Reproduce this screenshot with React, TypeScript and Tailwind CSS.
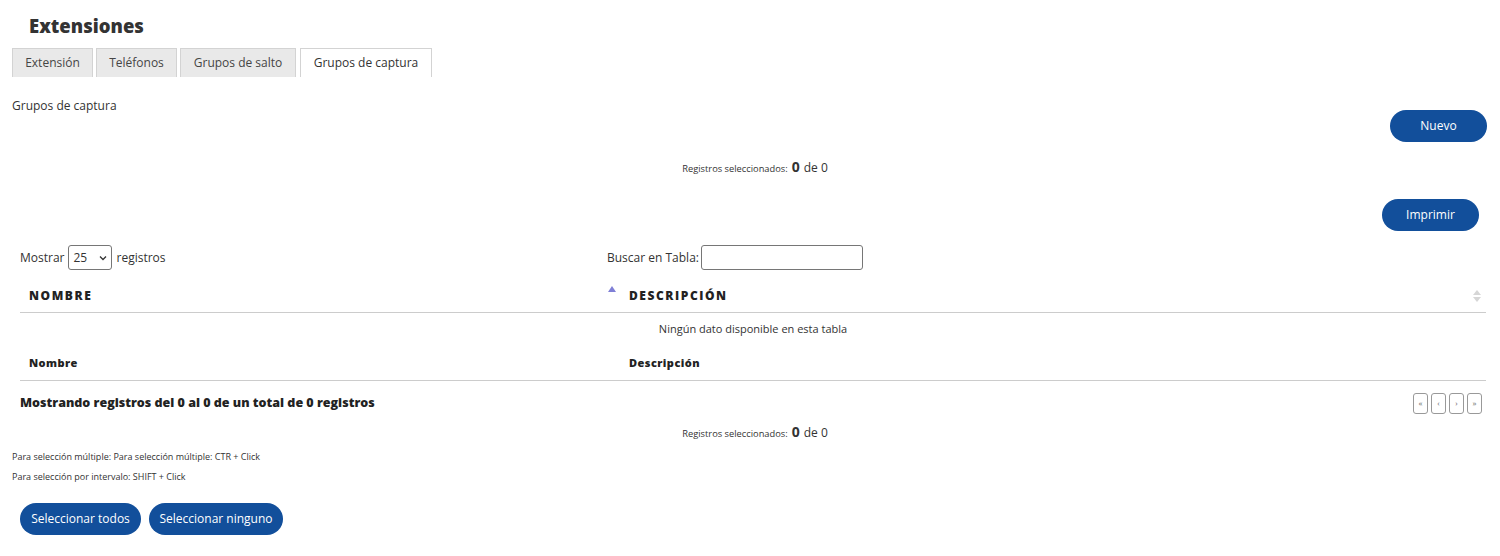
const tabs = [
  { label: "Extensión", w: "w-[81px]" },
  { label: "Teléfonos", w: "w-[81px]" },
  { label: "Grupos de salto", w: "w-[116px]" },
  { label: "Grupos de captura", w: "w-[132px]" },
];

const regular = "font-['Open_Sans',sans-serif]";
const heavy = "font-['Open_Sans',sans-serif] font-extrabold";

function BlueButton({ label, className = "" }: { label: string; className?: string }) {
  return (
    <button
      type="button"
      className={`h-8 whitespace-nowrap rounded-full bg-[#124f9b] px-2 text-[12px] text-white ${regular} ${className}`}
    >
      {label}
    </button>
  );
}

function Selected() {
  return (
    <div className={`flex items-baseline justify-center gap-1 pl-[10px] text-[#333] ${regular}`}>
      <span className="text-[9.3px]">Registros seleccionados:</span>
      <span className="text-[14px] font-bold">0</span>
      <span className="text-[12px]">de 0</span>
    </div>
  );
}

function SortBoth() {
  return (
    <svg width="8" height="12" viewBox="0 0 8 12" aria-hidden="true">
      <path d="M4 0 L8 5 H0 Z" fill="#d6d6d6" />
      <path d="M4 12 L8 7 H0 Z" fill="#d6d6d6" />
    </svg>
  );
}

export default function App() {
  return (
    <div className={`min-h-[556px] w-[1500px] bg-white text-[#333] ${regular}`}>
      <h1 className={`pl-[29px] pt-[13px] text-[18.5px] leading-[26px] text-[#333] ${heavy} font-bold`}>
        Extensiones
      </h1>

      <div className="mt-[9px] flex gap-[3px] pl-3">
        {tabs.map((t, i) => (
          <div
            key={t.label}
            className={`flex h-[29px] items-center justify-center border border-b-0 border-[#d3d3d3] text-[12px] ${t.w} ${
              i === 3 ? "ml-[1px] bg-white text-[#333]" : "bg-[#e9e9e9] text-[#454545]"
            }`}
          >
            {t.label}
          </div>
        ))}
      </div>

      <div className="px-3 pt-[21px] text-[12px] leading-4">Grupos de captura</div>

      <div className="-mt-[4px] flex justify-end pr-[13px]">
        <BlueButton label="Nuevo" className="w-[97px]" />
      </div>

      <div className="pt-[14px]">
        <Selected />
      </div>

      <div className="flex justify-end pr-[21px] pt-[22px]">
        <BlueButton label="Imprimir" className="w-[97px]" />
      </div>

      <div className="pl-5 pr-[14px]">
        <div className="mt-[14px] flex items-center text-[12px]">
          <div className="flex w-[587px] items-center gap-[4px]">
            <span>Mostrar</span>
            <div className="flex h-[25px] w-[44px] items-center justify-between rounded-[3px] border border-[#767676] px-[4px] text-[12px]">
              <span>25</span>
              <svg width="8" height="6" viewBox="0 0 8 6" aria-hidden="true">
                <path d="M1 1.5 L4 4.5 L7 1.5" stroke="#333" strokeWidth="1.3" fill="none" />
              </svg>
            </div>
            <span>registros</span>
          </div>
          <div className="flex items-center gap-[2px]">
            <span>Buscar en Tabla:</span>
            <div className="h-[25px] w-[162px] rounded-[3px] border border-[#767676]" />
          </div>
        </div>

        <table className="mt-[10px] w-full border-collapse">
          <thead>
            <tr className="h-[32px] border-b border-[#ccc]">
              <th className={`relative w-[600px] px-[9px] text-left text-[12px] tracking-[0.13em] text-[#222] ${heavy}`}>
                NOMBRE
                <svg
                  className="absolute right-[4px] top-[6px]"
                  width="8"
                  height="6"
                  viewBox="0 0 8 6"
                  aria-hidden="true"
                >
                  <path d="M4 0 L8 6 H0 Z" fill="#7f7fd6" />
                </svg>
              </th>
              <th className={`relative px-[9px] text-left text-[12px] tracking-[0.13em] text-[#222] ${heavy}`}>
                DESCRIPCIÓN
                <span className="absolute right-[5px] top-[10px]">
                  <SortBoth />
                </span>
              </th>
            </tr>
          </thead>
          <tbody>
            <tr className="h-[34px]">
              <td colSpan={2} className="text-center text-[11px]">
                Ningún dato disponible en esta tabla
              </td>
            </tr>
          </tbody>
          <tfoot>
            <tr className="h-[34px] border-b border-[#ccc]">
              <th className={`px-[9px] text-left text-[11px] tracking-[0.04em] text-[#222] ${heavy}`}>Nombre</th>
              <th className={`px-[9px] text-left text-[11px] tracking-[0.04em] text-[#222] ${heavy}`}>Descripción</th>
            </tr>
          </tfoot>
        </table>

        <div className="flex items-center justify-between pt-[12px]">
          <span className={`text-[12.5px] text-[#222] ${heavy}`}>
            Mostrando registros del 0 al 0 de un total de 0 registros
          </span>
          <div className="flex gap-[3px] pr-[4px]">
            {["«", "‹", "›", "»"].map((g) => (
              <div
                key={g}
                className="flex h-[21px] w-[15px] items-center justify-center rounded-[3px] border border-[#999] text-[8px] text-[#666]"
              >
                {g}
              </div>
            ))}
          </div>
        </div>
      </div>

      <div className="pt-[7px]">
        <Selected />
      </div>

      <div className="px-3 pt-[5px] text-[9px] leading-[20px]">
        <div>Para selección múltiple: Para selección múltiple: CTR + Click</div>
        <div>Para selección por intervalo: SHIFT + Click</div>
      </div>

      <div className="flex gap-2 px-5 pt-[16px]">
        <BlueButton label="Seleccionar todos" className="w-[121px]" />
        <BlueButton label="Seleccionar ninguno" className="w-[134px]" />
      </div>
    </div>
  );
}
